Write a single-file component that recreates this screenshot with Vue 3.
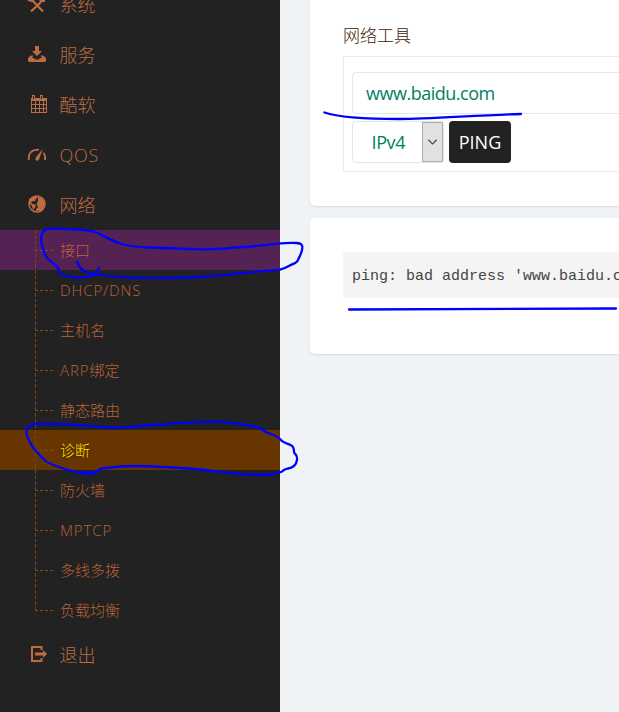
<script setup>
const topItems = [
  { icon: 'tools', label: '系统' },
  { icon: 'inbox', label: '服务' },
  { icon: 'calendar', label: '酷软' },
  { icon: 'gauge', label: 'QOS', latin: true },
  { icon: 'globe', label: '网络' },
]
const subItems = [
  { latin: '', label: '接口', state: 'hover' },
  { latin: 'DHCP/DNS', label: '' },
  { latin: '', label: '主机名' },
  { latin: 'ARP', label: '绑定' },
  { latin: '', label: '静态路由' },
  { latin: '', label: '诊断', state: 'active' },
  { latin: '', label: '防火墙' },
  { latin: 'MPTCP', label: '' },
  { latin: '', label: '多线多拨' },
  { latin: '', label: '负载均衡' },
]
</script>

<template>
  <div class="page">
    <aside class="sidebar">
      <div v-for="item in topItems" :key="item.label" class="item">
        <svg class="icon" viewBox="0 0 20 20">
          <g v-if="item.icon === 'tools'" fill="none" stroke="currentColor">
            <path d="M5 5L16 16.500" stroke-width="2.2" />
            <path d="M14 7L4 16.500" stroke-width="2.4" />
            <path d="M2 5Q4 1 9 2L5 6ZM12 3L14 6H18" stroke-width="2.2" />
          </g>
          <g v-else-if="item.icon === 'inbox'" fill="currentColor">
            <path d="M8 1h4v5h3l-5 5-5-5h3z" />
            <path d="M4 10.500h2.500L5 13h2l1 1.500h4l1-1.500h2l-1.500-2.500H16l3 2.500v3l-1 1H2l-1-1v-3z" />
          </g>
          <g v-else-if="item.icon === 'calendar'">
            <path d="M4 3h1V0h3v3h5V0h3v3h4v15H4z" fill="currentColor" />
            <path class="cells" d="M5 6h3v3H5zm4 0h3v3H9zm4 0h3v3h-3zm4 0h2v3h-2zM5 10h3v3H5zm4 0h3v3H9zm4 0h3v3h-3zm4 0h2v3h-2zM5 14h3v3H5zm4 0h3v3H9zm4 0h3v3h-3zm4 0h2v3h-2zM6 1h1v3H6zm8 0h1v3h-1z" />
          </g>
          <g v-else-if="item.icon === 'gauge'">
            <path d="M1.800 15C1 8 5 4.500 12 4.700M16.600 7.800Q18.600 11 18.200 15" fill="none" stroke="currentColor" stroke-width="1.800" />
            <path d="M15.800 4L12 14.500Q10.500 16.500 8.500 15Q8 13.500 9.500 11.500Z" fill="currentColor" />
          </g>
          <g v-else>
            <circle cx="10" cy="9" r="8" fill="none" stroke="currentColor" stroke-width="1.500" />
            <path d="M2 4L7 1l4 1-3 3h1L7 6.500 5 6 4 8l2 1 3 1-.5 2L6 15 5 11 2 8zM11 2l4 1 3 5-2 6-2.500 2L8 15.500 11 12 9.500 9 11 6z" fill="currentColor" />
          </g>
        </svg>
        <span :class="{ wide: item.latin }">{{ item.label }}</span>
      </div>
      <ul class="tree">
        <li v-for="(item, i) in subItems" :key="item.latin + item.label" class="leaf" :class="item.state">
          <svg class="branch" viewBox="0 0 20 40">
            <path class="trunk" :d="i === subItems.length - 1 ? 'M.5 0V20' : 'M.5 0V40'" />
            <path class="twig" d="M0 20.500H18" />
          </svg>
          <span><span v-if="item.latin" class="latin">{{ item.latin }}</span>{{ item.label }}</span>
        </li>
      </ul>
      <div class="item">
        <svg class="icon" viewBox="0 0 20 20">
          <path d="M14.500 5V2H5v14h9.500v-3" fill="none" stroke="currentColor" stroke-width="2" />
          <path d="M8 7.500h8V5l4 4-4 4v-2.500H8z" fill="currentColor" />
        </svg>
        <span>退出</span>
      </div>
    </aside>

    <main class="content">
      <section class="card tools-card">
        <h3>网络工具</h3>
        <div class="group">
          <div class="field">www.baidu.com</div>
          <div class="controls">
            <div class="select">
              <span>IPv4</span>
              <i><svg viewBox="0 0 12 8"><path d="M1.500 1.500L6 6L10.500 1.500" /></svg></i>
            </div>
            <button>PING</button>
          </div>
        </div>
      </section>
      <section class="card result-card">
        <pre>ping: bad address 'www.baidu.com'</pre>
      </section>
    </main>

    <svg class="ink" viewBox="0 0 619 712">
      <path d="M77 262C79 267 82 271 88 272.500S112 277 133 277.700S175 278.500 200 277S255 271.500 280 269.700C286 268 290 265 292 264.300S297 263 298 260S301 255 302 250S302 243.500 296.700 243S287 243 280 243.300C265 245 254 246.500 243 247S215 250 200 249.300S165 248.500 150 247.500S130 247 120 243.500S103 235 97 232.700S84 230 78 229.700S62 228 53 228.700S43.500 230 42 234S41 243 42.500 247S45 256 47.500 258.500S56 265 57.500 267S58.500 273.500 61 274.500S71 277.500 78 277.500S93 276 95 274.300S98 270 98.700 268" />
      <path d="M33 424.300C29 425 26 428 26.500 433S30 442 31.500 445S41 457 45 460.500S60 467.500 66.700 469.500S83 474 90 474S97 469 101.500 468.500S123 466 133 466S179 467.500 200 469.500S230 474 250 474.700S275 474.500 281.700 471.700C284 469 285 469 288 468.500S296 466.500 297 460S294 455 294 451.700S293 446 290.500 445S283 442.500 281 440S275 435.500 271 434S265 432 262 429.500S244 424 236.700 423.300S221 421.700 210 421.700S160 424.500 150 425S130 428 113 427.700S75 424.500 67 424.300S40 423 33 424.300" />
      <path d="M81 472.500L91 473L94 472" />
      <path d="M324.500 112.500C340 118 371 119 400 119S480 115 521 114" />
      <path d="M349 309.500L616 308.500" />
    </svg>
  </div>
</template>

<style>
body { margin: 0; overflow: hidden; }
</style>

<style scoped>
.page { position: relative; display: flex; width: 619px; height: 712px; overflow: hidden; background: #eff3f5; font-family: "Open Sans", "Noto Sans CJK SC", sans-serif; font-weight: 300; }
.sidebar { width: 280px; flex: none; background: #222; margin-top: -20px; color: #bd6c42; }
.item { display: flex; align-items: center; height: 50px; padding-left: 27px; font-size: 18px; gap: 12.500px; line-height: 26px; }
.icon { width: 20px; height: 20px; flex: none; }
.cells { fill: #222; }
.wide { letter-spacing: .7px; }
.tree { list-style: none; margin: 0; padding: 0; }
.leaf { display: flex; align-items: center; height: 40px; padding-left: 35px; gap: 5px; font-size: 15px; line-height: 22px; color: #bc6236; }
.leaf.hover { background: #542253; }
.leaf.active { background: #663500; color: #ffe000; text-shadow: 0 1px 3px #0008; }
.latin { letter-spacing: .9px; }
.branch { width: 20px; height: 40px; flex: none; shape-rendering: crispEdges; }
.branch path { fill: none; stroke: #874c0c; stroke-width: 1; }
.branch .twig { stroke-dasharray: 3 2; }
.branch .trunk { stroke: #74461a; stroke-dasharray: 3.700 2.014; }
.content { flex: 1; min-width: 0; padding-left: 30px; }
.card { box-sizing: border-box; width: 330px; padding-left: 33px; background: #fff; box-shadow: 0 1px 2px #0000001c; }
.tools-card { height: 206px; padding-top: 22px; border-radius: 0 0 5px 5px; }
.result-card { height: 136px; margin-top: 12px; padding-top: 34px; border-radius: 5px; }
h3 { margin: 0; height: 34px; line-height: 28px; font-size: 17px; font-weight: 300; color: #402000; }
.group { box-sizing: border-box; height: 116px; padding: 15px 0 0 8px; border: 1px solid #ebebeb; }
.field { box-sizing: border-box; height: 42px; padding-left: 13px; line-height: 41px; border: 1px solid #e3e9ea; border-radius: 4px; font-size: 18px; font-weight: 400; letter-spacing: -.48px; color: #008060; }
.controls { display: flex; gap: 5px; margin-top: 7px; }
.select { box-sizing: border-box; display: flex; justify-content: space-between; width: 92px; height: 42px; padding-left: 18.500px; border: 1px solid #dfe8e7; border-radius: 4px; font-size: 18px; line-height: 40px; font-weight: 400; letter-spacing: -.4px; color: #008060; }
.select i { box-sizing: border-box; display: flex; align-items: center; justify-content: center; width: 21px; height: 40px; background: #e1e1e1; border: 1px solid #adadad; }
.select svg { width: 11px; height: 8px; fill: none; stroke: #444; stroke-width: 1.300; }
button { width: 62px; height: 42px; padding: 0; border: 0; border-radius: 4px; background: #222; color: #fff; font: 400 18px/42px "Open Sans", sans-serif; }
pre { margin: 0; height: 46px; padding-left: 9px; background: #f4f4f4; color: #444; font: 15px/49px "Liberation Mono", monospace; overflow: hidden; }
.ink { position: absolute; left: 0; top: 0; width: 619px; height: 712px; pointer-events: none; fill: none; stroke: #00f; stroke-width: 2.300; stroke-linecap: round; stroke-linejoin: round; }
</style>
